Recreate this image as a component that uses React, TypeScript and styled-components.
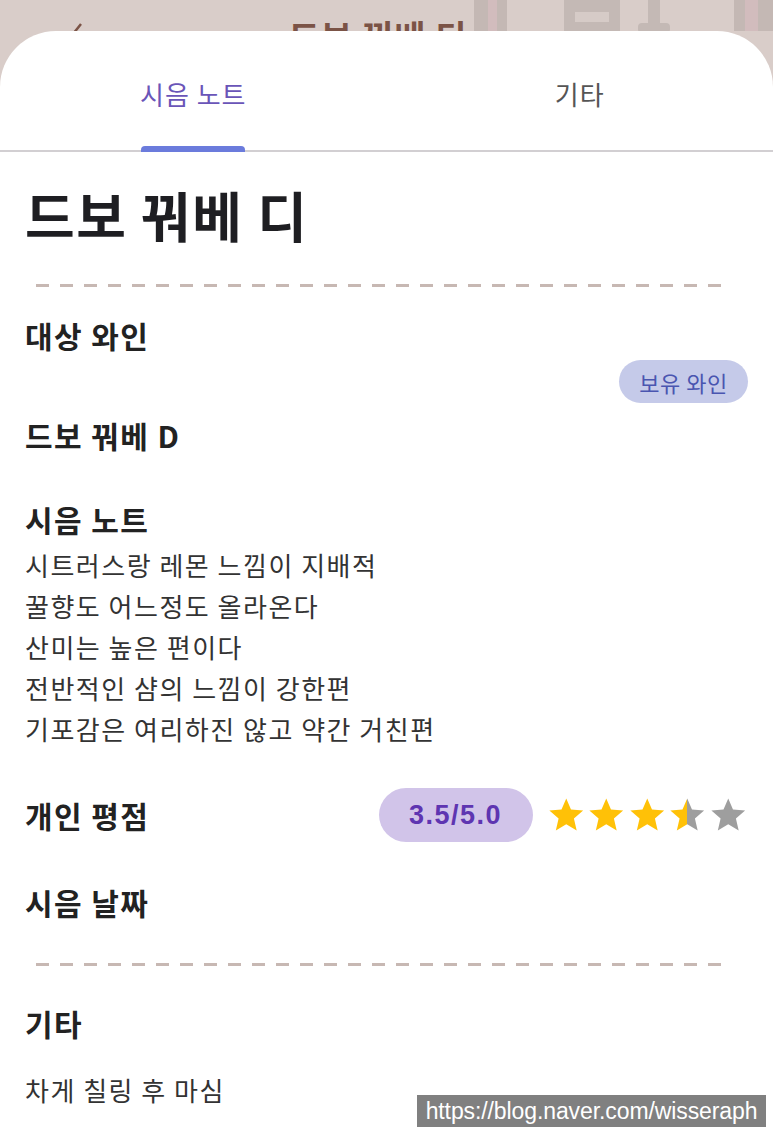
import React from 'react';
import styled, { createGlobalStyle } from 'styled-components';

const GlobalStyle = createGlobalStyle`
  html, body {
    margin: 0;
    padding: 0;
    background: #d9cdc9;
  }
  body {
    font-family: "Noto Sans CJK KR", "Noto Sans", sans-serif;
    color: #222;
  }
`;

const Page = styled.div`
  position: relative;
  min-height: 100vh;
  display: flex;
  flex-direction: column;
`;

const Header = styled.header`
  position: relative;
  height: 31px;
  overflow: hidden;
  background: #d9cdc9;
`;

const HeaderArt = styled.svg`
  position: absolute;
  inset: 0;
  width: 100%;
  height: 100%;
`;

const HeaderBar = styled.div`
  position: relative;
  display: flex;
  align-items: flex-start;
  padding: 19px 0 0 70px;
`;

const HeaderTitle = styled.span`
  flex: 1;
  margin-right: 101px;
  text-align: center;
  font-size: 34px;
  font-weight: 700;
  line-height: 34px;
  letter-spacing: 1px;
  color: #7b5346;
`;

const Sheet = styled.main`
  flex: 1;
  background: #fff;
  border-radius: 56px 56px 0 0;
`;

const TabBar = styled.nav`
  display: flex;
  height: 119px;
  border-bottom: 2px solid #d2cfd2;
`;

const Tab = styled.div<{ $active?: boolean }>`
  flex: 1;
  display: flex;
  flex-direction: column;
  align-items: center;
  padding-top: 45px;
  font-size: 26px;
  line-height: 36px;
  letter-spacing: 1px;
  color: ${(p) => (p.$active ? '#6a55b8' : '#555')};
`;

const Indicator = styled.div`
  margin-top: auto;
  width: 104px;
  height: 6px;
  margin-bottom: -2px;
  border-radius: 4px 4px 0 0;
  background: #6b7bdc;
`;

const Content = styled.section`
  padding: 31px 25px 40px;
  display: flex;
  flex-direction: column;
`;

const Title = styled.h1`
  margin: 0;
  font-size: 54px;
  line-height: 64px;
  font-weight: 700;
  letter-spacing: 1.5px;
  color: #1e1e22;
`;

const Divider = styled.div<{ $top: number }>`
  margin: ${(p) => p.$top}px 0 0 11px;
  width: 689px;
  height: 3px;
  background: repeating-linear-gradient(
    to right,
    #c7b8b3 0,
    #c7b8b3 13px,
    transparent 13px,
    transparent 24px
  );
`;

const Heading = styled.h2<{ $top: number }>`
  margin: ${(p) => p.$top}px 0 0;
  font-size: 30px;
  line-height: 40px;
  font-weight: 700;
  letter-spacing: 1.4px;
  color: #222;
`;

const BadgeRow = styled.div`
  display: flex;
  justify-content: flex-end;
  margin-top: 5px;
`;

const Badge = styled.span`
  display: inline-flex;
  align-items: center;
  justify-content: center;
  width: 129px;
  height: 43px;
  border-radius: 22px;
  background: #c5cae9;
  color: #4a55b0;
  font-size: 22px;
  letter-spacing: 0.5px;
`;

const Notes = styled.div<{ $top: number }>`
  margin-top: ${(p) => p.$top}px;
  display: flex;
  flex-direction: column;
`;

const NoteLine = styled.p`
  margin: 0;
  font-size: 26px;
  line-height: 41px;
  letter-spacing: 1.5px;
  color: #333;
`;

const RatingRow = styled.div`
  display: flex;
  align-items: center;
  justify-content: space-between;
  margin-top: 39px;
  height: 54px;
`;

const RatingLabel = styled.h2`
  margin: 0;
  font-size: 30px;
  line-height: 40px;
  font-weight: 700;
  letter-spacing: 1.4px;
  color: #222;
`;

const RatingRight = styled.div`
  display: flex;
  align-items: center;
  gap: 13px;
`;

const ScorePill = styled.span`
  display: inline-flex;
  align-items: center;
  justify-content: center;
  width: 154px;
  height: 54px;
  border-radius: 27px;
  background: #d1c4e9;
  color: #5e35b1;
  font-family: "Liberation Sans", Arial, sans-serif;
  font-weight: 700;
  font-size: 27px;
  letter-spacing: 1.5px;
`;

const Stars = styled.div`
  display: flex;
`;

const Watermark = styled.div`
  position: absolute;
  top: 1095px;
  right: 7px;
  width: 349px;
  height: 32px;
  display: flex;
  align-items: center;
  justify-content: center;
  background: #808080;
  color: #fff;
  font-family: "Liberation Sans", Arial, sans-serif;
  font-size: 23px;
  letter-spacing: -0.1px;
`;

const STAR = 'M12 17.27L18.18 21l-1.64-7.03L22 9.24l-7.19-.61L12 2 9.19 8.63 2 9.24l5.46 4.73L5.82 21z';

const Star = ({ fill, id }: { fill: number; id: string }) => (
  <svg width="40.5" height="40.5" viewBox="0 0 24 24">
    <defs>
      <linearGradient id={id} x1="0" x2="1" y1="0" y2="0">
        <stop offset={`${fill * 100}%`} stopColor="#ffc107" />
        <stop offset={`${fill * 100}%`} stopColor="#9e9e9e" />
      </linearGradient>
    </defs>
    <path d={STAR} fill={`url(#${id})`} />
  </svg>
);

const notes = [
  '시트러스랑 레몬 느낌이 지배적',
  '꿀향도 어느정도 올라온다',
  '산미는 높은 편이다',
  '전반적인 샴의 느낌이 강한편',
  '기포감은 여리하진 않고 약간 거친편',
];

const score = 3.5;

export default function App() {
  return (
    <Page>
      <GlobalStyle />
      <Header>
        <HeaderArt viewBox="0 0 773 31" preserveAspectRatio="none">
          <rect x="474" y="0" width="33" height="31" fill="#c4b8b4" />
          <rect x="488" y="0" width="9" height="31" fill="#d2bcbd" />
          <rect x="564" y="0" width="56" height="31" fill="#c4b9b5" />
          <rect x="575" y="12" width="34" height="10" fill="#d6cbc7" />
          <rect x="648" y="0" width="12" height="26" fill="#c4b9b5" />
          <rect x="638" y="23" width="32" height="10" rx="4" fill="#c4b9b5" />
          <rect x="734" y="0" width="39" height="31" fill="#c4b8b4" />
          <rect x="745" y="0" width="13" height="31" fill="#d2bcbd" />
        </HeaderArt>
        <HeaderBar>
          <svg width="14" height="24" viewBox="0 0 14 24">
            <path d="M11 5L3 15l8 10" stroke="#7b5346" strokeWidth="2.5" fill="none" />
          </svg>
          <HeaderTitle>드보 꿔베 디</HeaderTitle>
        </HeaderBar>
      </Header>
      <Sheet>
        <TabBar>
          <Tab $active>
            시음 노트
            <Indicator />
          </Tab>
          <Tab>기타</Tab>
        </TabBar>
        <Content>
          <Title>드보 꿔베 디</Title>
          <Divider $top={37} />
          <Heading $top={28}>대상 와인</Heading>
          <BadgeRow>
            <Badge>보유 와인</Badge>
          </BadgeRow>
          <Heading $top={12}>드보 꿔베 D</Heading>
          <Heading $top={44}>시음 노트</Heading>
          <Notes $top={5}>
            {notes.map((n, i) => (
              <NoteLine key={'note_' + i}>{n}</NoteLine>
            ))}
          </Notes>
          <RatingRow>
            <RatingLabel>개인 평점</RatingLabel>
            <RatingRight>
              <ScorePill>{score.toFixed(1)}/5.0</ScorePill>
              <Stars>
                {[0, 1, 2, 3, 4].map((i) => (
                  <Star
                    key={'star_' + i}
                    id={'star_' + i}
                    fill={Math.max(0, Math.min(1, score - i))}
                  />
                ))}
              </Stars>
            </RatingRight>
          </RatingRow>
          <Heading $top={40}>시음 날짜</Heading>
          <Divider $top={41} />
          <Heading $top={37}>기타</Heading>
          <Notes $top={26}>
            <NoteLine>차게 칠링 후 마심</NoteLine>
          </Notes>
        </Content>
      </Sheet>
      <Watermark>https://blog.naver.com/wisseraph</Watermark>
    </Page>
  );
}
